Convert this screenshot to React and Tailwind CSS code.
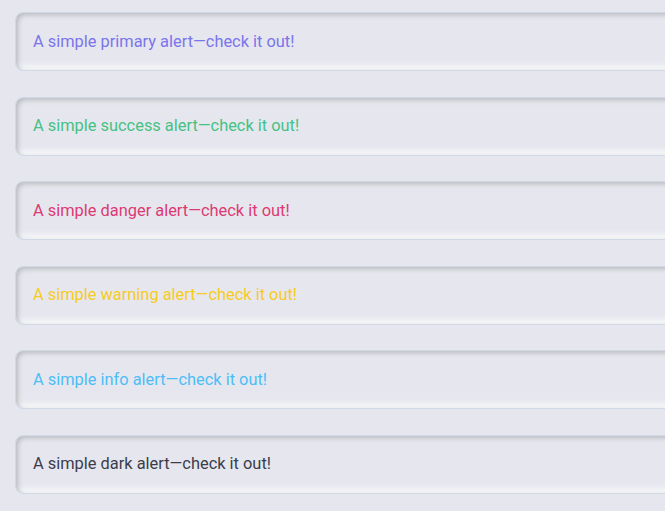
import React from "react";

const alerts = [
  { name: "primary", cls: "text-[#7b74ec]" },
  { name: "success", cls: "text-[#45c185]" },
  { name: "danger", cls: "text-[#dd3a72]" },
  { name: "warning", cls: "text-[#f7cb23]" },
  { name: "info", cls: "text-[#4dbdf8]" },
  { name: "dark", cls: "text-[#3b3d4c]" },
];

export default function App() {
  return (
    <div
      className="w-[665px] h-[511px] overflow-hidden bg-[#e6e7ee] pt-[12px] pl-[15px]"
      style={{ fontFamily: "Roboto, 'Liberation Sans', sans-serif" }}
    >
      <div className="flex flex-col gap-[25.5px] w-[700px]">
        {alerts.map((a) => (
          <div
            key={a.name}
            className={`h-[59px] flex items-center pl-[17px] pt-[1px] rounded-[8px] border border-[#d1d9e6] bg-[#e6e7ee] shadow-[inset_2px_2px_5px_#b8b9be,inset_-3px_-3px_7px_#ffffff] text-[16.4px] ${a.cls}`}
          >
            A simple {a.name} alert—check it out!
          </div>
        ))}
      </div>
    </div>
  );
}
